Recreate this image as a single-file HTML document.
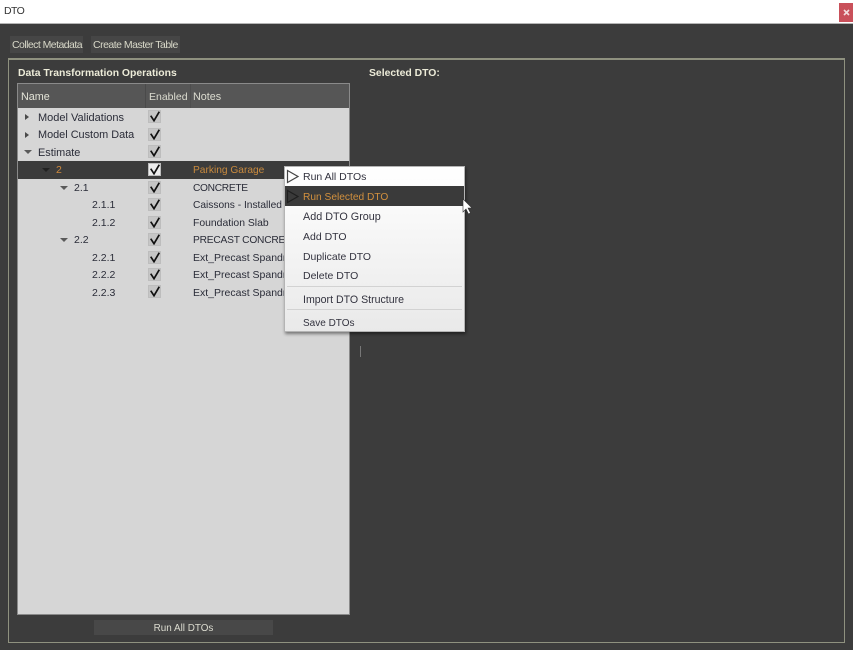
<!DOCTYPE html>
<html>
<head>
<meta charset="utf-8">
<title>DTO</title>
<style>
html,body{margin:0;padding:0;width:853px;height:650px;overflow:hidden;background:#3c3c3c;}
body{position:relative;font-family:"Liberation Sans",sans-serif;font-size:10.5px;}
div,svg{position:absolute;box-sizing:border-box;}
.t{white-space:nowrap;line-height:14px;height:14px;filter:blur(.35px);}
.d{color:#2a2c38;}
.n{font-size:10.2px;}
.cb{left:148px;width:13px;height:13px;background:#c6c6c6;border:1px solid #bdbdbd;}
.cb svg{left:1px;top:0;width:11px;height:11px;}
.cb path{fill:none;stroke:#111;stroke-width:1.7;}
.arr{width:0;height:0;}
.right{border-left:4px solid #4a4a4a;border-top:3.5px solid transparent;border-bottom:3.5px solid transparent;left:25px;}
.down{border-top:4px solid #5a5a5a;border-left:4px solid transparent;border-right:4px solid transparent;}
.m{left:303px;color:#33333f;}
.sep{left:287px;width:175px;height:1px;background:#d2d2d2;}
</style>
</head>
<body>
<!-- title bar -->
<div style="left:0;top:0;width:853px;height:24px;background:#fff;border-bottom:1px solid #b5b5b5;"></div>
<div class="t" style="left:4px;top:4px;color:#333;font-size:10.5px;letter-spacing:-.6px;">DTO</div>
<div style="left:839px;top:3px;width:14px;height:19px;background:#c9505a;"></div>
<svg style="left:843px;top:9px;width:7px;height:7px;" viewBox="0 0 7 7"><path d="M1 1L6 6M6 1L1 6" stroke="#f3dcdc" stroke-width="1.6"/></svg>

<!-- tabs -->
<div style="left:10px;top:36px;width:73px;height:17px;background:#464646;"></div>
<div style="left:91px;top:36px;width:89px;height:17px;background:#464646;"></div>
<div class="t" style="left:12px;top:38px;color:#d8d8c8;letter-spacing:-.55px;">Collect Metadata</div>
<div class="t" style="left:93px;top:38px;color:#d8d8c8;letter-spacing:-.5px;">Create Master Table</div>

<!-- frame -->
<div style="left:8px;top:58px;width:837px;height:585px;border:1px solid #8f917f;border-top-width:2px;"></div>
<div class="t" style="left:18px;top:67px;color:#ecebd8;font-weight:bold;font-size:10.4px;">Data Transformation Operations</div>
<div class="t" style="left:369px;top:67px;color:#ecebd8;font-weight:bold;font-size:10.4px;">Selected DTO:</div>

<!-- table -->
<div style="left:17px;top:83px;width:333px;height:532px;background:#d6d6d6;border:1px solid #8a8a8a;"></div>
<div style="left:18px;top:84px;width:331px;height:24px;background:#565656;"></div>
<div style="left:145px;top:84px;width:1px;height:24px;background:#4a4a4a;"></div>
<div style="left:190px;top:84px;width:1px;height:24px;background:#4e4e4e;"></div>
<div class="t" style="left:21px;top:90px;color:#e4e4d8;font-size:10.8px;">Name</div>
<div class="t" style="left:149px;top:90px;color:#dcdcd0;">Enabled</div>
<div class="t" style="left:193px;top:90px;color:#dcdcd0;font-size:10.8px;">Notes</div>

<!-- highlighted row -->
<div style="left:18px;top:161px;width:331px;height:18px;background:#3c3c3c;"></div>

<!-- tree arrows -->
<div class="arr right" style="top:114px;"></div>
<div class="arr right" style="top:132px;"></div>
<div class="arr down" style="left:24px;top:150px;"></div>
<div class="arr down" style="left:42px;top:168px;border-top-color:#222;"></div>
<div class="arr down" style="left:60px;top:186px;"></div>
<div class="arr down" style="left:60px;top:238px;"></div>

<!-- name column -->
<div class="t d" style="left:38px;top:111px;font-size:11px;">Model Validations</div>
<div class="t d" style="left:38px;top:128px;font-size:10.9px;">Model Custom Data</div>
<div class="t d" style="left:38px;top:146px;font-size:10.9px;">Estimate</div>
<div class="t" style="left:56px;top:163px;color:#d08a3c;">2</div>
<div class="t d" style="left:74px;top:181px;">2.1</div>
<div class="t d" style="left:92px;top:198px;">2.1.1</div>
<div class="t d" style="left:92px;top:216px;">2.1.2</div>
<div class="t d" style="left:74px;top:233px;">2.2</div>
<div class="t d" style="left:92px;top:251px;">2.2.1</div>
<div class="t d" style="left:92px;top:268px;">2.2.2</div>
<div class="t d" style="left:92px;top:286px;">2.2.3</div>

<!-- checkboxes -->
<div class="cb" style="top:110px;"><svg viewBox="0 0 11 11"><path d="M.7 4.7L4 9.7L9.3 .7"/></svg></div>
<div class="cb" style="top:128px;"><svg viewBox="0 0 11 11"><path d="M.7 4.7L4 9.7L9.3 .7"/></svg></div>
<div class="cb" style="top:145px;"><svg viewBox="0 0 11 11"><path d="M.7 4.7L4 9.7L9.3 .7"/></svg></div>
<div class="cb" style="top:163px;background:#ececec;"><svg viewBox="0 0 11 11"><path d="M.7 4.7L4 9.7L9.3 .7"/></svg></div>
<div class="cb" style="top:181px;"><svg viewBox="0 0 11 11"><path d="M.7 4.7L4 9.7L9.3 .7"/></svg></div>
<div class="cb" style="top:198px;"><svg viewBox="0 0 11 11"><path d="M.7 4.7L4 9.7L9.3 .7"/></svg></div>
<div class="cb" style="top:216px;"><svg viewBox="0 0 11 11"><path d="M.7 4.7L4 9.7L9.3 .7"/></svg></div>
<div class="cb" style="top:233px;"><svg viewBox="0 0 11 11"><path d="M.7 4.7L4 9.7L9.3 .7"/></svg></div>
<div class="cb" style="top:251px;"><svg viewBox="0 0 11 11"><path d="M.7 4.7L4 9.7L9.3 .7"/></svg></div>
<div class="cb" style="top:268px;"><svg viewBox="0 0 11 11"><path d="M.7 4.7L4 9.7L9.3 .7"/></svg></div>
<div class="cb" style="top:285px;"><svg viewBox="0 0 11 11"><path d="M.7 4.7L4 9.7L9.3 .7"/></svg></div>

<!-- notes column -->
<div class="t n" style="left:193px;top:164px;color:#c98a3e;">Parking Garage</div>
<div class="t d n" style="left:193px;top:182px;letter-spacing:-.3px;">CONCRETE</div>
<div class="t d n" style="left:193px;top:199px;">Caissons - Installed</div>
<div class="t d n" style="left:193px;top:217px;font-size:10.4px;">Foundation Slab</div>
<div class="t d n" style="left:193px;top:234px;letter-spacing:-.2px;">PRECAST CONCRETE</div>
<div class="t d" style="left:193px;top:251px;">Ext_Precast Spandrel</div>
<div class="t d" style="left:193px;top:268px;">Ext_Precast Spandrel</div>
<div class="t d" style="left:193px;top:286px;">Ext_Precast Spandrel</div>

<!-- run button -->
<div style="left:94px;top:620px;width:179px;height:15px;background:#484848;"></div>
<div class="t" style="left:94px;width:179px;text-align:center;top:622px;color:#dcdcd0;font-size:9.9px;">Run All DTOs</div>

<!-- small tick -->
<div style="left:360px;top:346px;width:1px;height:11px;background:#777;"></div>

<!-- context menu -->
<div style="left:284px;top:166px;width:181px;height:166px;background:linear-gradient(#ffffff,#e9e9e9);border:1px solid #b4b4b4;box-shadow:1px 2px 3px rgba(0,0,0,.45);"></div>
<div style="left:285px;top:186px;width:179px;height:20px;background:#3a3a3a;"></div>
<svg style="left:286px;top:169px;width:14px;height:15px;" viewBox="0 0 14 15"><path d="M1.5 1.5L12 7.5L1.5 13.5Z" fill="none" stroke="#444" stroke-width="1.2"/></svg>
<svg style="left:286px;top:189px;width:14px;height:15px;" viewBox="0 0 14 15"><path d="M1.5 1.5L12 7.5L1.5 13.5Z" fill="none" stroke="#1f1f1f" stroke-width="1.2"/></svg>
<div class="t m" style="top:170px;">Run All DTOs</div>
<div class="t" style="left:303px;top:191px;color:#d2903e;font-size:10.2px;">Run Selected DTO</div>
<div class="t m" style="top:210px;font-size:10.8px;">Add DTO Group</div>
<div class="t m" style="top:230px;">Add DTO</div>
<div class="t m" style="top:251px;font-size:10.4px;">Duplicate DTO</div>
<div class="t m" style="top:269px;">Delete DTO</div>
<div class="sep" style="top:286px;"></div>
<div class="t m" style="top:293px;font-size:10.6px;">Import DTO Structure</div>
<div class="sep" style="top:309px;"></div>
<div class="t m" style="top:317px;font-size:10px;">Save DTOs</div>

<!-- cursor -->
<svg style="left:462px;top:198px;width:12px;height:18px;" viewBox="0 0 12 18"><path d="M1 1L1 14L4 11L6.5 16L8.5 15L6 10L10 10Z" fill="#fff" stroke="#333" stroke-width=".6"/></svg>
</body>
</html>
